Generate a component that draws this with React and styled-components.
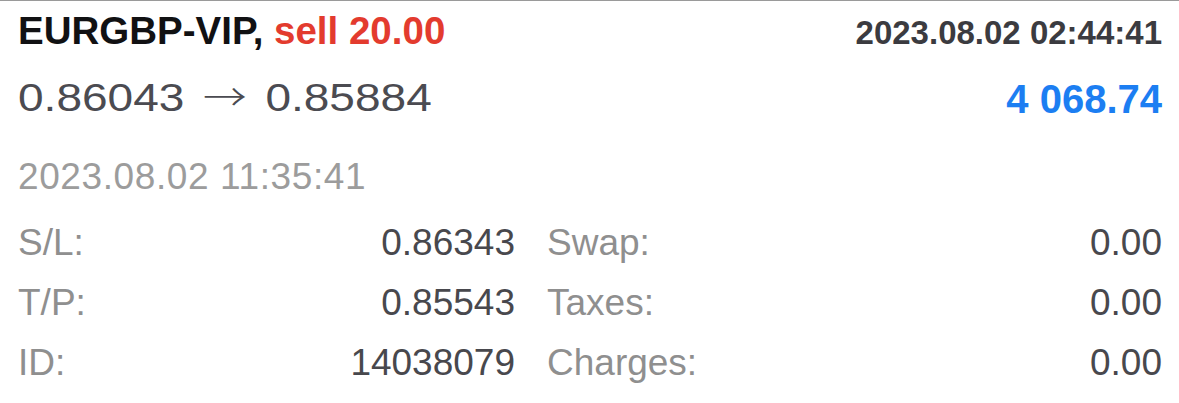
import React from "react";
import styled, { createGlobalStyle } from "styled-components";

const GlobalStyle = createGlobalStyle`
  html, body {
    margin: 0;
    padding: 0;
    background: #ffffff;
  }
  body {
    font-family: "Liberation Sans", Arial, sans-serif;
  }
`;

const Card = styled.div`
  width: 1179px;
  box-sizing: border-box;
  border-top: 1px solid #9a9a9a;
  padding: 8px 17px 0 18px;
  background: #fff;
`;

const TopRow = styled.div`
  display: flex;
  justify-content: space-between;
  align-items: baseline;
`;

const Symbol = styled.div`
  font-size: 38.5px;
  line-height: 44px;
  font-weight: 700;
  color: #111113;
`;

const Side = styled.span`
  color: ${(p) => (p.$type === "sell" ? "#e33b2e" : "#1c7ef2")};
`;

const CloseTime = styled.div`
  font-size: 33px;
  font-weight: 700;
  color: #3b3b40;
`;

const PriceRow = styled.div`
  display: flex;
  justify-content: space-between;
  align-items: flex-start;
  margin-top: 18px;
`;

const Prices = styled.div`
  display: inline-block;
  font-size: 39px;
  line-height: 48px;
  color: #4b4b51;
  white-space: nowrap;
  transform: scaleX(1.18);
  transform-origin: left center;
`;

const Arrow = styled.span`
  font-family: "Noto Sans CJK JP", "DejaVu Sans", sans-serif;
  font-weight: 300;
  font-size: 37px;
  margin: 0 5px;
`;

const Profit = styled.div`
  font-size: 40px;
  line-height: 48px;
  font-weight: 700;
  margin-top: 4px;
  color: ${(p) => (p.$loss ? "#e33b2e" : "#1c7ef2")};
`;

const OpenTime = styled.div`
  margin-top: 32px;
  font-size: 37px;
  line-height: 44px;
  letter-spacing: 0.6px;
  color: #9c9c9c;
`;

const Details = styled.div`
  margin-top: 14px;
  display: grid;
  grid-template-columns: 497px 1fr;
  column-gap: 32px;
`;

const Field = styled.div`
  display: flex;
  justify-content: space-between;
  font-size: 37px;
  line-height: 60px;
`;

const Label = styled.span`
  color: #8f8f8f;
`;

const Value = styled.span`
  color: #48484d;
`;

const fields = [
  ["S/L:", "0.86343"],
  ["Swap:", "0.00"],
  ["T/P:", "0.85543"],
  ["Taxes:", "0.00"],
  ["ID:", "14038079"],
  ["Charges:", "0.00"],
];

export default function App() {
  return (
    <>
      <GlobalStyle />
      <Card>
        <TopRow>
          <Symbol>
            EURGBP-VIP, <Side $type="sell">sell 20.00</Side>
          </Symbol>
          <CloseTime>2023.08.02 02:44:41</CloseTime>
        </TopRow>
        <PriceRow>
          <Prices>
            0.86043 <Arrow>→</Arrow> 0.85884
          </Prices>
          <Profit>4 068.74</Profit>
        </PriceRow>
        <OpenTime>2023.08.02 11:35:41</OpenTime>
        <Details>
          {fields.map(([label, value]) => (
            <Field key={label}>
              <Label>{label}</Label>
              <Value>{value}</Value>
            </Field>
          ))}
        </Details>
      </Card>
    </>
  );
}
